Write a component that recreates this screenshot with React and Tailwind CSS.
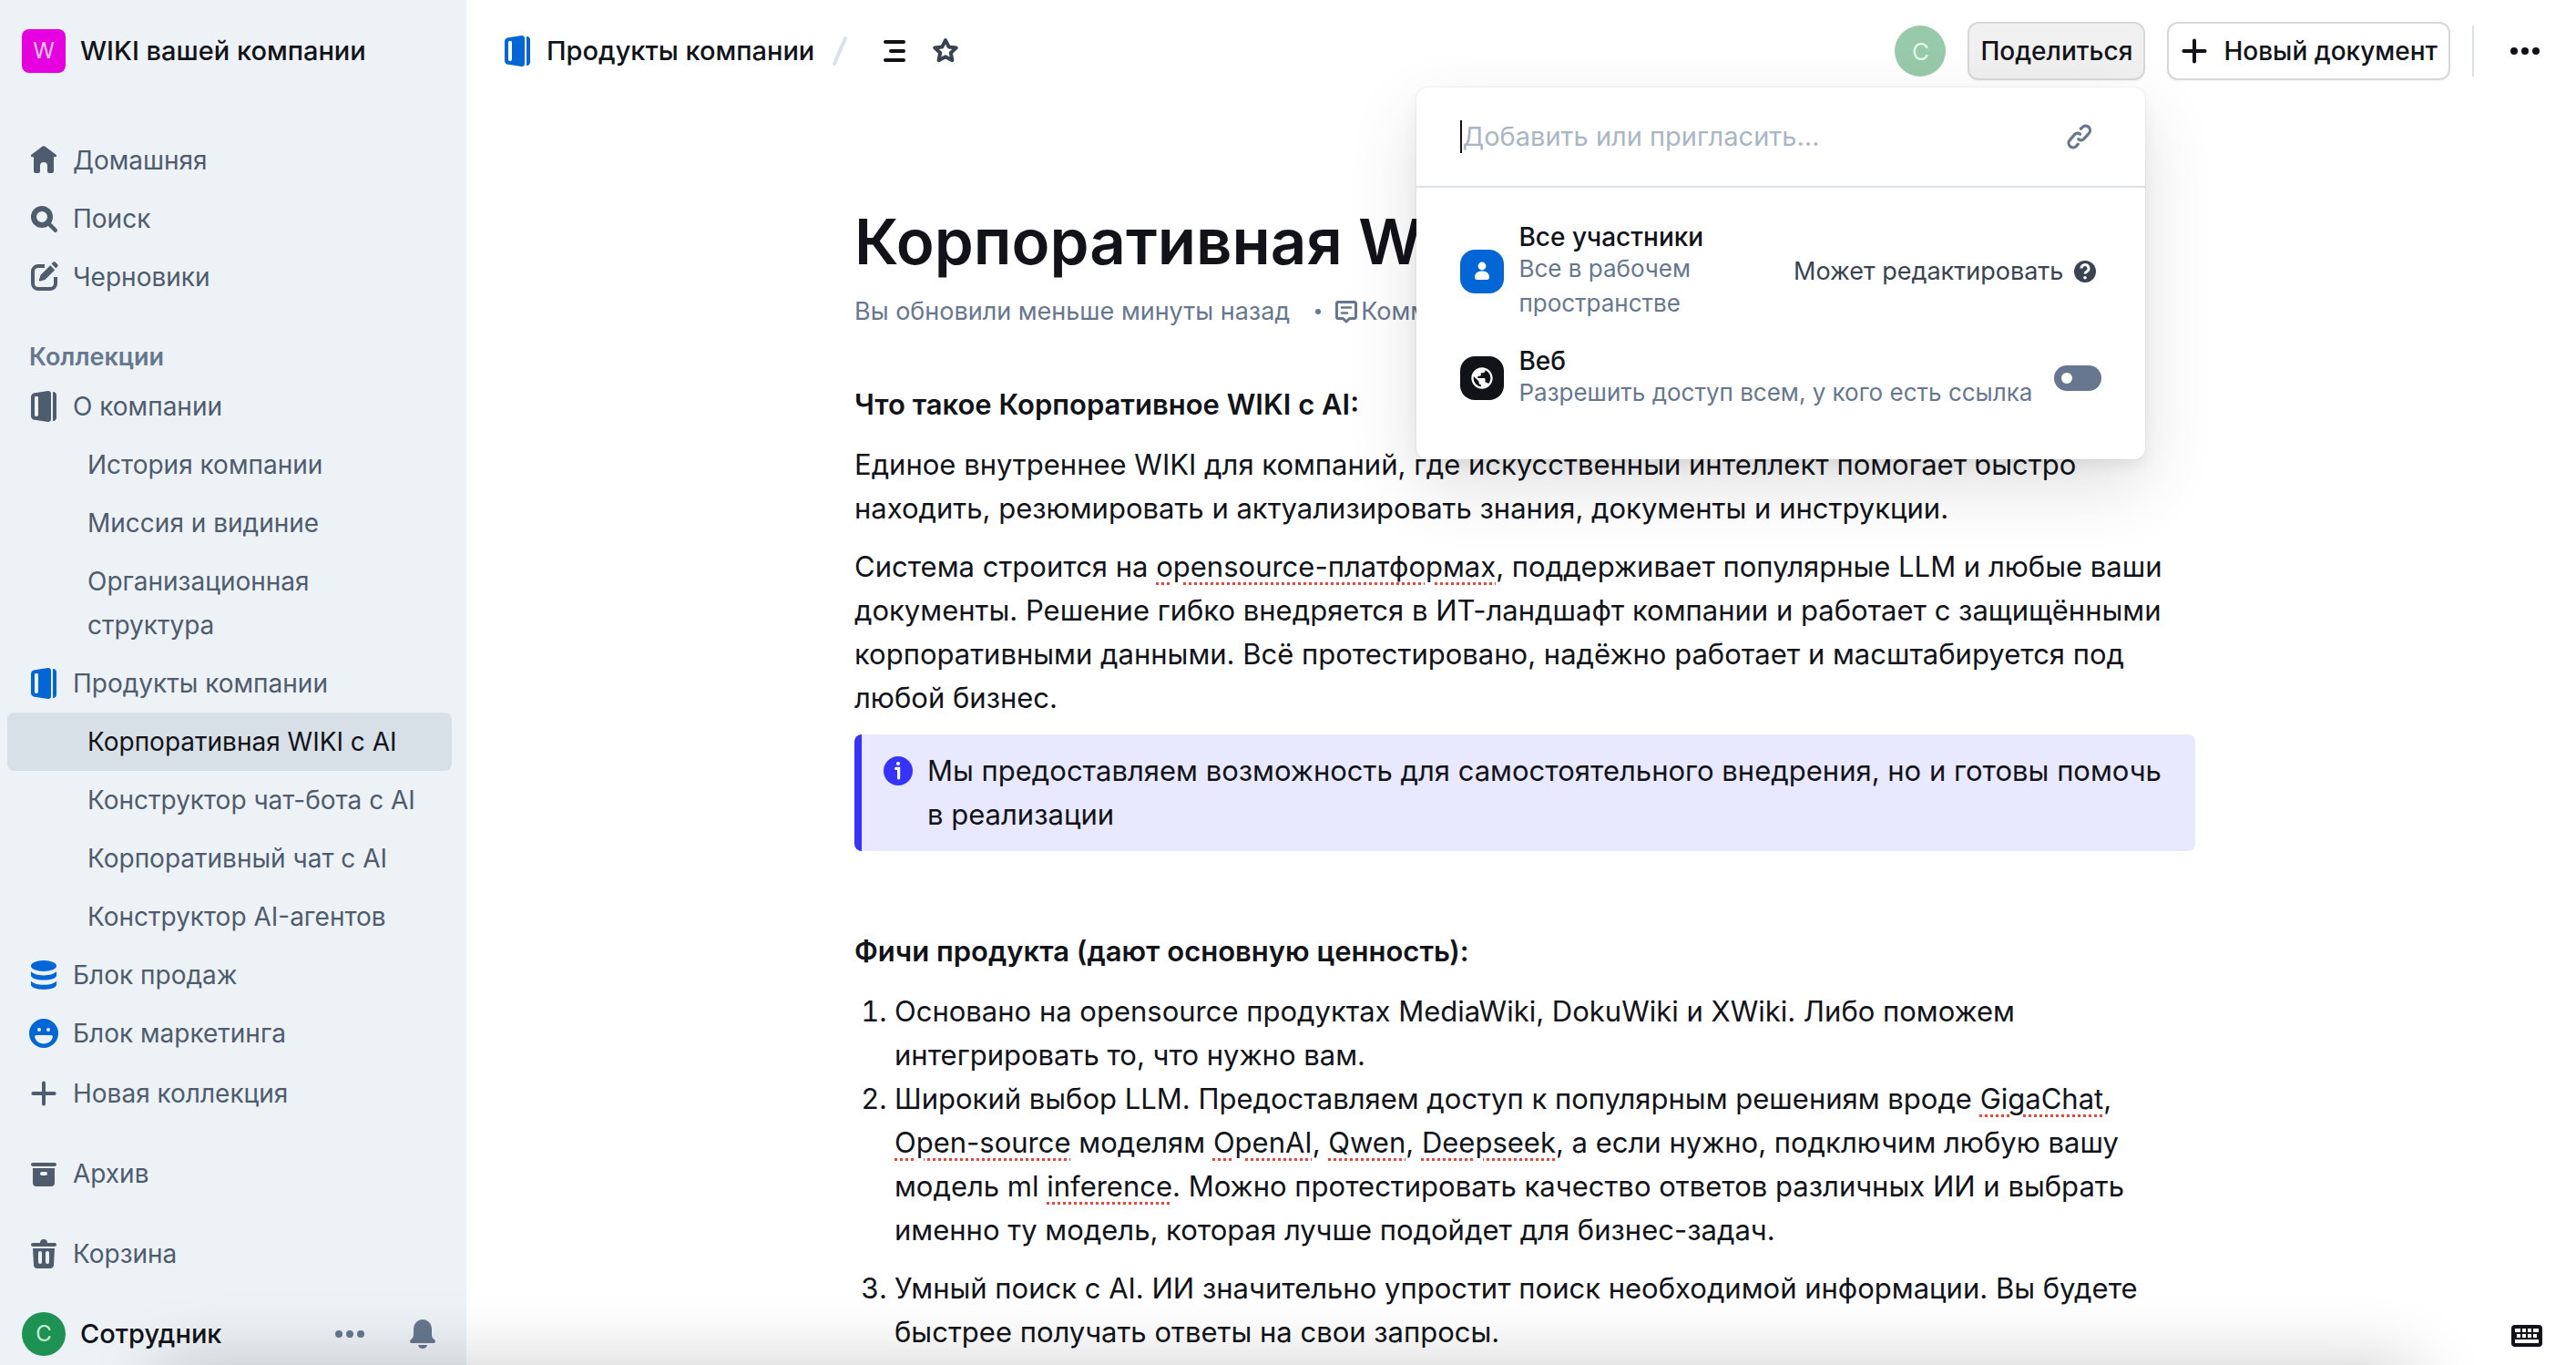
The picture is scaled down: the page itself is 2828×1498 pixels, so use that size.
import { MdPublic } from 'react-icons/md';

const mutedText = 'text-[#4e5c6e]';

function HomeIcon() {
  return (
    <svg viewBox="0 0 24 24" className="size-12 shrink-0" fill="currentColor">
      <path d="M12.600 4.300l6.200 4.600c.5.4.3 1.200-.4 1.200H17.500v7.900a1 1 0 0 1-1 1h-1.500a1 1 0 0 1-1-1v-3a2 2 0 0 0-4 0v3a1 1 0 0 1-1 1H7.500a1 1 0 0 1-1-1v-7.900H5.600c-.7 0-.9-.8-.4-1.200l6.200-4.600a1 1 0 0 1 1.200 0z" />
    </svg>
  );
}

function SearchIcon() {
  return (
    <svg viewBox="0 0 24 24" className="size-12 shrink-0" fill="none" stroke="currentColor" strokeLinecap="round">
      <circle cx="11" cy="11" r="4.500" strokeWidth="3" />
      <path d="M14.700 14.700l3.700 3.700" strokeWidth="2.200" />
    </svg>
  );
}

function EditIcon() {
  return (
    <svg viewBox="0 0 24 24" className="size-12 shrink-0">
      <path d="M12.500 6H9a3 3 0 0 0-3 3v6.500a3 3 0 0 0 3 3h6.500a3 3 0 0 0 3-3V12" fill="none" stroke="currentColor" strokeWidth="2" />
      <path d="M10.200 14.300c-.5.1-.8-.2-.7-.7l.7-2.600 5.400-5.400 2.500 2.500-5.400 5.400zM16.300 4.800l.9-.9c.3-.3.9-.3 1.200 0l1.200 1.200c.3.3.3.9 0 1.200l-.9.9z" fill="currentColor" />
    </svg>
  );
}

function CollectionIcon() {
  return (
    <svg viewBox="0 0 24 24" className="size-12 shrink-0" fill="currentColor">
      <path fillRule="evenodd" d="M14.300 3.500c.9-.1 1.700.5 1.700 1.400v14.200c0 .9-.8 1.500-1.700 1.400L7 19.400c-1.200-.2-2-1-2-2.200V6.800c0-1.200.8-2 2-2.200zM7.700 6.500a.7.7 0 0 0-.7.7v9.600c0 .4.3.7.7.7H8c.6 0 1-.3 1-.7V7.200c0-.4-.3-.7-.7-.7z" />
      <path d="M17 4c1.300 0 2 .8 2 2v12c0 1.200-.7 2-2 2z" />
    </svg>
  );
}

function DatabaseIcon() {
  return (
    <svg viewBox="0 0 24 24" className="size-12 shrink-0" fill="currentColor">
      <ellipse cx="12" cy="7" rx="7" ry="3" />
      <path d="M5 10c1 1.400 3.700 2.200 7 2.200s6-.8 7-2.200v2.200c0 1.500-3.100 2.600-7 2.600s-7-1.100-7-2.600z" />
      <path d="M5 15.200c1 1.400 3.700 2.200 7 2.200s6-.8 7-2.200v2.200c0 1.500-3.100 2.600-7 2.600s-7-1.100-7-2.600z" />
    </svg>
  );
}

function SmileyIcon() {
  return (
    <svg viewBox="0 0 24 24" className="size-12 shrink-0" fill="currentColor">
      <path fillRule="evenodd" d="M12 4a8 8 0 1 1 0 16 8 8 0 0 1 0-16zM9.500 9a1 1 0 1 0 0 2 1 1 0 0 0 0-2zm5 0a1 1 0 1 0 0 2 1 1 0 0 0 0-2zM8 13c-.6 0-1 .4-.9 1 .4 2.100 2.200 3.700 4.900 3.700s4.500-1.600 4.900-3.700c.1-.6-.3-1-.9-1z" />
    </svg>
  );
}

function PlusIcon() {
  return (
    <svg viewBox="0 0 24 24" className="size-12 shrink-0" fill="none" stroke="currentColor" strokeWidth="2" strokeLinecap="round">
      <path d="M12 6.200v11.600M6.200 12h11.600" />
    </svg>
  );
}

function ArchiveIcon() {
  return (
    <svg viewBox="0 0 24 24" className="size-12 shrink-0" fill="currentColor">
      <rect x="5" y="6" width="14" height="2" rx="1" />
      <path fillRule="evenodd" d="M6 9h12v8a2 2 0 0 1-2 2H8a2 2 0 0 1-2-2zm5 2a1 1 0 0 0 0 2h2a1 1 0 0 0 0-2z" />
    </svg>
  );
}

function TrashIcon() {
  return (
    <svg viewBox="0 0 24 24" className="size-12 shrink-0" fill="currentColor">
      <path d="M6 6h4a2 2 0 0 1 4 0h4a1 1 0 0 1 0 2H6a1 1 0 0 1 0-2z" />
      <path fillRule="evenodd" d="M6 9h12l-.5 9.100a2 2 0 0 1-2 1.900h-7a2 2 0 0 1-2-1.900zm4 1.500a1 1 0 0 0-1 1v5a1 1 0 0 0 2 0v-5a1 1 0 0 0-1-1zm4 0a1 1 0 0 0-1 1v5a1 1 0 0 0 2 0v-5a1 1 0 0 0-1-1z" />
    </svg>
  );
}

function MoreIcon() {
  return (
    <svg viewBox="0 0 24 24" className="size-12 shrink-0" fill="currentColor">
      <circle cx="6" cy="12" r="2" />
      <circle cx="12" cy="12" r="2" />
      <circle cx="18" cy="12" r="2" />
    </svg>
  );
}

function BellIcon() {
  return (
    <svg viewBox="0 0 24 24" className="size-12 shrink-0" fill="currentColor">
      <path d="M12 4a5 5 0 0 1 5 5v3.500c0 .9.400 1.600 1.100 2.200.6.500.9.800.9 1.300 0 .6-.4 1-1 1H6c-.6 0-1-.4-1-1 0-.5.300-.8.900-1.300.7-.6 1.100-1.300 1.100-2.200V9a5 5 0 0 1 5-5zM9.500 18h5c-.2 1.200-1.200 2-2.500 2s-2.300-.8-2.500-2z" />
    </svg>
  );
}

function ContentsIcon() {
  return (
    <svg viewBox="0 0 24 24" className="size-12 shrink-0" fill="none" stroke="currentColor" strokeWidth="2" strokeLinecap="round">
      <path d="M7 7h10M10 12h7M7 17h10" />
    </svg>
  );
}

function StarIcon() {
  return (
    <svg viewBox="0 0 24 24" className="size-12 shrink-0" fill="none" stroke="currentColor" strokeWidth="2" strokeLinejoin="round">
      <path d="M12 6l1.800 3.700 4.100.5-3 2.800.8 4.100-3.700-2-3.700 2 .8-4.100-3-2.800 4.100-.5z" />
    </svg>
  );
}

function LinkIcon() {
  return (
    <svg viewBox="0 0 24 24" className="size-12 shrink-0" fill="none" stroke="currentColor" strokeWidth="1.600" strokeLinecap="round">
      <path d="M12.700 7.600l.9-.8a2.400 2.400 0 0 1 3.500 3.400l-2.700 3a2.200 2.200 0 0 1-3 .2" />
      <path d="M12.300 10.600a2.200 2.200 0 0 0-3 .2l-2.600 3a2.400 2.400 0 0 0 3.500 3.400l1-1.100" />
    </svg>
  );
}

function CommentIcon() {
  return (
    <svg viewBox="0 0 32 32" className="size-8 shrink-0" fill="none" stroke="currentColor" strokeWidth="3" strokeLinejoin="round" strokeLinecap="round">
      <path d="M7 5.500h18a1.500 1.500 0 0 1 1.500 1.500v15a1.500 1.500 0 0 1-1.500 1.500h-5.500L16 27l-3.500-3.500H7A1.500 1.500 0 0 1 5.500 22V7A1.500 1.500 0 0 1 7 5.500z" />
      <path d="M11 11.500h10M11 17.500h6" strokeWidth="2.600" />
    </svg>
  );
}

function PersonIcon() {
  return (
    <svg viewBox="0 0 24 24" className="size-12" fill="currentColor">
      <circle cx="12" cy="9" r="2.200" />
      <path d="M8 15c0-2 1.600-3.300 4-3.300s4 1.300 4 3.300c0 1-.5 1.500-1.300 1.500H9.300C8.500 16.500 8 16 8 15z" />
    </svg>
  );
}

function InfoIcon() {
  return (
    <svg viewBox="0 0 24 24" className="size-12 shrink-0">
      <circle cx="12" cy="12" r="8" fill="#3633ff" />
      <circle cx="12" cy="8" r="1" fill="#fff" />
      <path d="M10.800 10.700h1.500v5.300" fill="none" stroke="#fff" strokeWidth="1.600" strokeLinecap="round" />
    </svg>
  );
}

function HelpIcon() {
  return (
    <svg viewBox="0 0 24 24" className="size-12 shrink-0">
      <circle cx="12" cy="12" r="6" fill="#394351" />
      <path d="M10 10.300a2 2 0 1 1 3 1.700c-.7.4-1 .7-1 1.300" fill="none" stroke="#fff" strokeWidth="1.500" />
      <circle cx="12" cy="15.400" r=".9" fill="#fff" />
    </svg>
  );
}

function KeyboardIcon() {
  return (
    <svg viewBox="0 0 34 24" className="h-6 w-9">
      <rect width="34" height="24" rx="4" fill="#111319" />
      <path d="M4 4h6v4H4zM12 4h4v4h-4zM18 4h4v4h-4zM24 4h6v4h-6zM6 10h4v4H6zM12 10h4v4h-4zM18 10h4v4h-4zM24 10h4v4h-4zM4 16h26v4H4z" fill="#fff" />
    </svg>
  );
}

function NavItem({ icon, children, iconClass = '' }) {
  return (
    <a href="#" className={`flex items-center gap-2 px-4 h-16 shrink-0 ${mutedText}`}>
      <span className={iconClass}>{icon}</span>
      {children}
    </a>
  );
}

function DocItem({ children, active }) {
  return (
    <a
      href="#"
      className={`block rounded-lg pl-22 pr-6 py-2 leading-12 ${active ? 'bg-[#d7e0e6] text-[#111319]' : mutedText}`}
    >
      {children}
    </a>
  );
}

function Sidebar() {
  return (
    <aside className="w-128 shrink-0 bg-[#edf2f6] pl-2 pr-4 pt-8 pb-2.5 text-[28px] flex flex-col">
      <div className="flex items-center gap-4 px-4 h-12">
        <span className="size-12 rounded-lg bg-[#e600e0] text-[#ffc9fb] text-2xl flex items-center justify-center">W</span>
        <span className="text-[29px] font-medium text-[#111319]">WIKI вашей компании</span>
      </div>
      <nav className="mt-16 flex flex-col">
        <NavItem icon={<HomeIcon />}>Домашняя</NavItem>
        <NavItem icon={<SearchIcon />}>Поиск</NavItem>
        <NavItem icon={<EditIcon />}>Черновики</NavItem>
        <h3 className="mt-9 mb-0.5 px-6 text-[27px] leading-10 font-semibold text-[#66778f]">Коллекции</h3>
        <NavItem icon={<CollectionIcon />}>О компании</NavItem>
        <DocItem>История компании</DocItem>
        <DocItem>Миссия и видиние</DocItem>
        <DocItem>Организационная структура</DocItem>
        <NavItem icon={<CollectionIcon />} iconClass="text-[#0366d6]">Продукты компании</NavItem>
        <DocItem active>Корпоративная WIKI с AI</DocItem>
        <DocItem>Конструктор чат-бота с AI</DocItem>
        <DocItem>Корпоративный чат с AI</DocItem>
        <DocItem>Конструктор AI-агентов</DocItem>
        <NavItem icon={<DatabaseIcon />} iconClass="text-[#0366d6]">Блок продаж</NavItem>
        <NavItem icon={<SmileyIcon />} iconClass="text-[#0366d6]">Блок маркетинга</NavItem>
        <div className="mt-0.5 flex flex-col gap-6">
          <NavItem icon={<PlusIcon />}>Новая коллекция</NavItem>
          <NavItem icon={<ArchiveIcon />}>Архив</NavItem>
          <NavItem icon={<TrashIcon />}>Корзина</NavItem>
        </div>
      </nav>
      <div className="mt-auto flex items-center pl-4 pr-2 h-12">
        <span className="size-12 rounded-full bg-[#1e9253] text-[#c5f2d8] text-2xl flex items-center justify-center">С</span>
        <span className="ml-4 flex-1 text-[29px] font-medium text-[#111319]">Сотрудник</span>
        <button aria-label="Меню" className="text-[#66778f]"><MoreIcon /></button>
        <button aria-label="Уведомления" className="ml-8 text-[#66778f]"><BellIcon /></button>
      </div>
    </aside>
  );
}

function SharePopover() {
  return (
    <div className="absolute right-0 top-full mt-2 w-200 rounded-xl bg-white z-10 pb-[54px] font-normal shadow-[0_0_2px_rgba(0,0,0,0.12),0_8px_16px_rgba(0,0,0,0.06),0_30px_80px_rgba(0,0,0,0.12)]">
      <div className="flex items-center h-[110px] px-12 border-b-2 border-[#dae1e9]">
        <input
          aria-label="Добавить или пригласить"
          placeholder="Добавить или пригласить…"
          className="flex-1 min-w-0 h-9 border-l-2 border-[#111319] text-[29px] outline-none text-[#111319] placeholder:text-[#a9b6c5]"
        />
        <button aria-label="Копировать ссылку" className="text-[#66778f]"><LinkIcon /></button>
      </div>
      <div className="flex items-center gap-4 px-12 pt-[38px]">
        <span className="shrink-0 size-12 rounded-2xl bg-[#0366d6] text-white"><PersonIcon /></span>
        <div className="flex-1 min-w-0">
          <div className="text-[28px] leading-8 font-medium text-[#111319]">Все участники</div>
          <div className="text-[26px] leading-[38px] text-[#66778f]">Все в рабочем пространстве</div>
        </div>
        <button className="-mr-1.5 flex items-center text-[27px] text-[#394351]">
          Может редактировать <HelpIcon />
        </button>
      </div>
      <div className="flex items-center gap-4 px-12 pt-7">
        <span className="shrink-0 size-12 rounded-2xl bg-[#111319] text-white flex items-center justify-center">
          <MdPublic className="size-7" />
        </span>
        <label htmlFor="web" className="flex-1 min-w-0">
          <span className="block text-[28px] leading-8 font-medium text-[#111319]">Веб</span>
          <span className="block text-[26px] leading-[38px] whitespace-nowrap text-[#66778f]">Разрешить доступ всем, у кого есть ссылка</span>
        </label>
        <input
          id="web"
          type="checkbox"
          role="switch"
          className="appearance-none shrink-0 w-13 h-7 rounded-full bg-[#66778f] flex items-center pl-2 before:size-3 before:rounded-full before:bg-white"
        />
      </div>
    </div>
  );
}

function Header() {
  return (
    <header className="flex items-center h-28 px-8 text-[28px] text-[#111319]">
      <a href="#" className="flex items-center gap-2 text-[29px] font-medium">
        <span className="text-[#0366d6]"><CollectionIcon /></span>
        Продукты компании
      </a>
      <svg viewBox="0 0 24 48" className="ml-4 w-6 h-12" stroke="#dae1e9" strokeWidth="4" strokeLinecap="round">
        <path d="M6 38L18 10" />
      </svg>
      <button aria-label="Содержание" className="ml-6"><ContentsIcon /></button>
      <button aria-label="В избранное" className="ml-2 text-[#394351]"><StarIcon /></button>
      <div className="ml-auto flex items-center gap-6 font-medium">
        <span className="size-14 rounded-full bg-[#98c9ab] text-[#e0f8e8] text-[26px] font-normal flex items-center justify-center">С</span>
        <div className="relative">
          <button className="h-16 px-3 rounded-xl border-2 border-[#d8d8d8] bg-[#f0f0f0] shadow-xs">Поделиться</button>
          <SharePopover />
        </div>
        <button className="h-16 pl-1 pr-3 rounded-xl border-2 border-[#d8d8d8] bg-white shadow-xs flex items-center gap-2">
          <PlusIcon /> Новый документ
        </button>
        <span className="w-0.5 h-14 bg-[#dae1e9]" />
        <button aria-label="Ещё" className="ml-2"><MoreIcon /></button>
      </div>
    </header>
  );
}

function Misspelled({ children }) {
  return <span className="underline decoration-dotted decoration-[#f0433a] decoration-3 underline-offset-6">{children}</span>;
}

function Document() {
  return (
    <article className="w-368 ml-[426px] pt-27 text-[31px] leading-12 text-[#111319]">
      <h1 className="text-[69px] leading-[90px] font-semibold">Корпоративная WIKI с AI</h1>
      <p className="mt-2 flex items-center text-[27px] leading-12 text-[#66778f]">
        Вы обновили меньше минуты назад
        <span className="ml-7 mr-3 size-1.5 rounded-full bg-[#66778f]" />
        <CommentIcon />
        Комментировать
      </p>
      <h2 className="mt-[54px] font-semibold">Что такое Корпоративное WIKI с AI:</h2>
      <p className="mt-[18px]">
        Единое внутреннее WIKI для компаний, где искусственный интеллект помогает быстро находить, резюмировать и
        актуализировать знания, документы и инструкции.
      </p>
      <p className="mt-4">
        Система строится на <Misspelled>opensource-платформах</Misspelled>, поддерживает популярные LLM и любые ваши
        документы. Решение гибко внедряется в ИТ-ландшафт компании и работает с защищёнными корпоративными данными. Всё
        протестировано, надёжно работает и масштабируется под любой бизнес.
      </p>
      <div className="mt-4 flex gap-2 rounded-lg border-l-8 border-[#3633ff] bg-[#e8e9ff] py-4 px-4">
        <InfoIcon />
        <p>Мы предоставляем возможность для самостоятельного внедрения, но и готовы помочь в реализации</p>
      </div>
      <h2 className="mt-[86px] font-semibold">Фичи продукта (дают основную ценность):</h2>
      <ol className="mt-[18px] pl-11 list-decimal">
        <li>Основано на opensource продуктах MediaWiki, DokuWiki и XWiki. Либо поможем интегрировать то, что нужно вам.</li>
        <li>
          Широкий выбор LLM. Предоставляем доступ к популярным решениям вроде <Misspelled>GigaChat</Misspelled>,{' '}
          <Misspelled>Open-source</Misspelled> моделям <Misspelled>OpenAI</Misspelled>, <Misspelled>Qwen</Misspelled>,{' '}
          <Misspelled>Deepseek</Misspelled>, а если нужно, подключим любую вашу модель ml{' '}
          <Misspelled>inference</Misspelled>. Можно протестировать качество ответов различных ИИ и выбрать именно ту
          модель, которая лучше подойдет для бизнес-задач.
        </li>
        <li className="mt-4">
          Умный поиск с AI. ИИ значительно упростит поиск необходимой информации. Вы будете быстрее получать ответы на
          свои запросы.
        </li>
      </ol>
    </article>
  );
}

export default function App() {
  return (
    <div className="flex h-screen overflow-hidden bg-white font-['Inter',sans-serif]">
      <Sidebar />
      <main className="flex-1 min-w-0">
        <Header />
        <Document />
      </main>
      <button aria-label="Горячие клавиши" className="fixed right-9 bottom-5"><KeyboardIcon /></button>
      <div className="fixed top-full inset-x-44 h-40 shadow-[0_0_80px_rgba(0,0,0,0.2)] pointer-events-none" />
    </div>
  );
}
